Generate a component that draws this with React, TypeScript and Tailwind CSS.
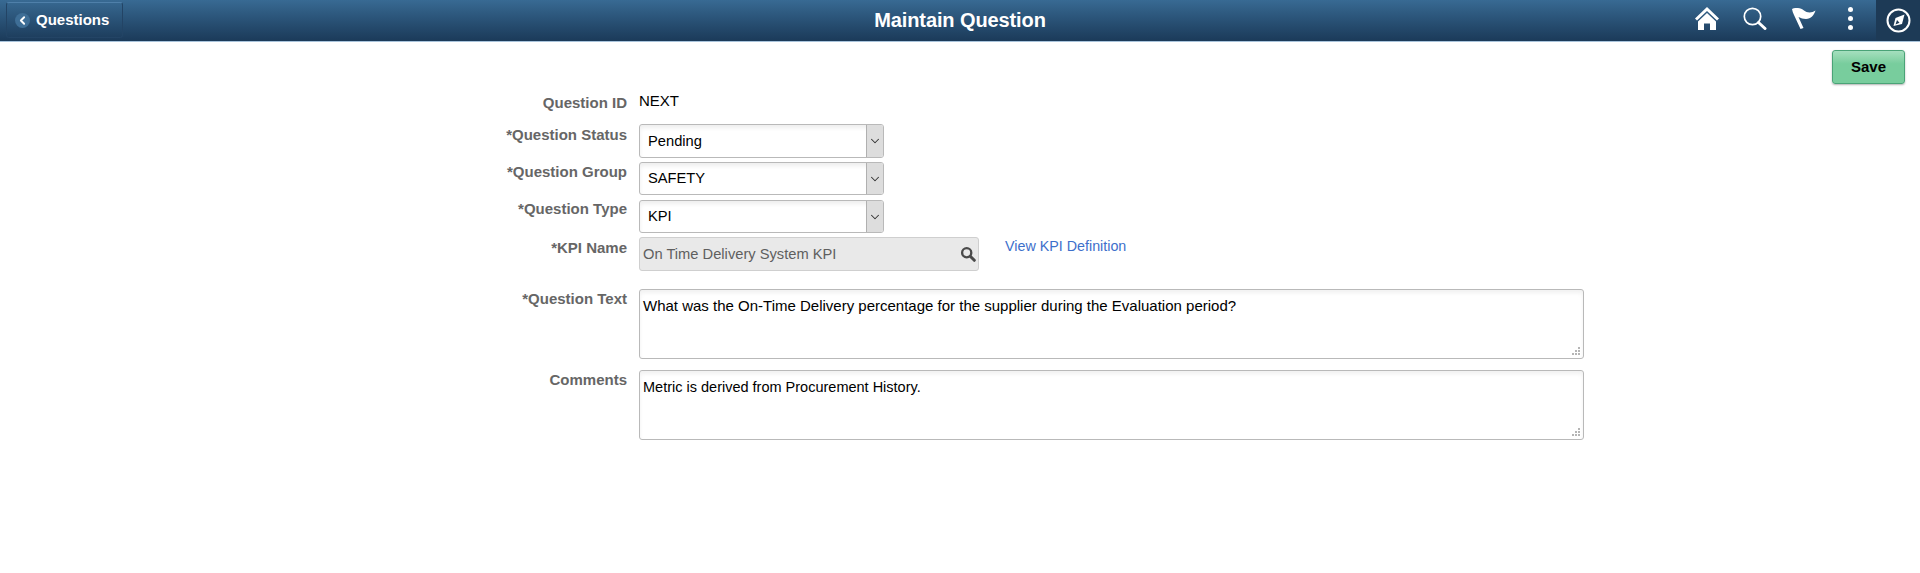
import React from 'react';
import { ChevronDown, ChevronLeft } from 'lucide-react';

const HomeIcon = () => (
  <svg width="24" height="23" viewBox="0 0 24 23" fill="#fff">
    <path d="M12 0 L24 11.5 L22 13.5 L12 4 L2 13.5 L0 11.5 Z" />
    <path d="M12 6 L21 14.5 V23 H15 V16.5 H9 V23 H3 V14.5 Z" />
  </svg>
);

const SearchIcon = () => (
  <svg width="24" height="23" viewBox="0 0 24 23" fill="none" stroke="#fff">
    <circle cx="9.5" cy="9.5" r="8.2" strokeWidth="1.7" />
    <path d="M15.5 15.5 L22 21.5" strokeWidth="3" strokeLinecap="round" />
  </svg>
);

const FlagIcon = () => (
  <svg width="24" height="21" viewBox="0 0 24 21" fill="#fff">
    <path d="M0 1 C4 -1 9 0 12 2.5 C15 5 20 5 23.5 2.5 C22 7 19 11 14 11 C11 11 9 10 6.5 9 L11.5 20 L8.5 21 L2 7 C1 5 0.3 3 0 1 Z" />
  </svg>
);

const CompassIcon = () => (
  <svg width="25" height="25" viewBox="0 0 25 25" fill="none">
    <circle cx="12.5" cy="12.5" r="11" stroke="#fff" strokeWidth="2" />
    <path d="M18.5 6.5 L16 16 L7.5 18 L9.5 10 Z" fill="#fff" />
    <path d="M9.5 16.5 L11 12 L13.5 14.8 Z" fill="#1d3a56" />
  </svg>
);

const Lookup = () => (
  <svg width="16" height="16" viewBox="0 0 16 16" fill="none" stroke="#4a4a4a">
    <circle cx="6.7" cy="6.7" r="4.6" strokeWidth="2.3" />
    <path d="M10.5 10.5 L14.3 14.3" strokeWidth="3" strokeLinecap="round" />
  </svg>
);

const Grip = () => (
  <svg width="8" height="8" viewBox="0 0 8 8" fill="#b5b5b5" className="absolute bottom-[3px] right-[3px]">
    <rect x="6" y="0" width="2" height="2" />
    <rect x="3" y="3" width="2" height="2" />
    <rect x="6" y="3" width="2" height="2" />
    <rect x="0" y="6" width="2" height="2" />
    <rect x="3" y="6" width="2" height="2" />
    <rect x="6" y="6" width="2" height="2" />
  </svg>
);

const Field = ({ label, top = 0, children }: { label: string; top?: number; children: React.ReactNode }) => (
  <div className="flex items-start">
    <div className="w-[627px] shrink-0 text-right text-[15px] leading-[16px] font-bold text-[#666666]" style={{ paddingTop: top }}>
      {label}
    </div>
    <div className="ml-[12px] min-w-0">{children}</div>
  </div>
);

const SelectBox = ({ value, h }: { value: string; h: string }) => (
  <div className={`${h} w-[245px] flex rounded-[3px] border border-[#b9b9b9] bg-white shadow-[inset_0_3px_4px_rgba(0,0,0,0.07)]`}>
    <div className="flex-1 pl-[8px] flex items-center text-[14.7px] text-black">{value}</div>
    <div className="w-[17px] flex items-center justify-center bg-[#dddddd] border-l border-[#b0b0b0] rounded-r-[2px]">
      <ChevronDown size={14} color="#333333" strokeWidth={1.8} />
    </div>
  </div>
);

const TextBox = ({ value, size }: { value: string; size: string }) => (
  <div className={`${size} relative w-[945px] h-[70px] rounded-[3px] border border-[#b9b9b9] bg-white px-[3px] pt-[8px] leading-[16px] text-black shadow-[inset_0_3px_4px_rgba(0,0,0,0.06)]`}>
    {value}
    <Grip />
  </div>
);

export default function App() {
  return (
    <div className="h-[573px] bg-white font-['Liberation_Sans',Arial,sans-serif]">
      <header className="relative h-[42px] flex items-center justify-between bg-gradient-to-b from-[#386a93] to-[#1b3a59] border-b border-[#a9c4dc]">
        <button className="ml-[6px] mt-[-1px] h-[36px] w-[117px] flex items-center rounded-[3px] border border-[#234465] border-t-[#4f80aa] pl-[8px] text-[15px] font-bold text-white">
          <span className="w-[15px] h-[15px] rounded-full bg-[#3e6e96] flex items-center justify-center">
            <ChevronLeft size={13} color="#fff" strokeWidth={3.5} />
          </span>
          <span className="ml-[6px]">Questions</span>
        </button>
        <h1 className="absolute left-0 right-0 top-[9px] text-center text-[20px] leading-[23px] tracking-[-0.1px] font-bold text-white">Maintain Question</h1>
        <div className="flex items-center h-full">
          <div className="flex items-center pb-[4px]">
            <div className="w-[24px] mr-[24px] flex"><HomeIcon /></div>
            <div className="w-[24px] mr-[25px] flex"><SearchIcon /></div>
            <div className="w-[24px] mr-[32px] flex"><FlagIcon /></div>
            <div className="w-[5px] mr-[23px] flex flex-col gap-[4px]">
              <span className="w-[5px] h-[5px] rounded-full bg-white" />
              <span className="w-[5px] h-[5px] rounded-full bg-white" />
              <span className="w-[5px] h-[5px] rounded-full bg-white" />
            </div>
          </div>
          <div className="w-[44px] h-full flex items-center justify-center bg-[#1d3a56]"><CompassIcon /></div>
        </div>
      </header>

      <div className="flex justify-end pt-[8px] pr-[15px]">
        <button className="w-[73px] h-[34px] rounded-[3px] border border-[#4aa377] bg-gradient-to-b from-[#a5dfbe] to-[#78cd9d] to-40% text-[15px] font-bold text-black shadow-[0_1px_2px_rgba(0,0,0,0.3)]">
          Save
        </button>
      </div>

      <div className="flex flex-col mt-[8px]">
        <div className="mb-[13px]">
          <Field label="Question ID" top={3}>
            <div className="text-[15px] leading-[16px] pt-[1px] text-black">NEXT</div>
          </Field>
        </div>
        <div className="mb-[4px]">
          <Field label="*Question Status" top={3}><SelectBox value="Pending" h="h-[34px]" /></Field>
        </div>
        <div className="mb-[5px]">
          <Field label="*Question Group" top={2}><SelectBox value="SAFETY" h="h-[33px]" /></Field>
        </div>
        <div className="mb-[4px]">
          <Field label="*Question Type" top={1}><SelectBox value="KPI" h="h-[33px]" /></Field>
        </div>
        <div className="mb-[18px]">
          <Field label="*KPI Name" top={3}>
            <div className="flex items-start">
              <div className="w-[340px] h-[34px] flex items-center justify-between rounded-[3px] border border-[#cfcfcf] bg-[#e9e9e9] pl-[3px] pr-[2px] text-[14.7px] text-[#5f5f5f]">
                <span>On Time Delivery System KPI</span>
                <Lookup />
              </div>
              <a className="ml-[26px] pt-[1px] text-[14.3px] leading-[16px] text-[#3d6fcb]">View KPI Definition</a>
            </div>
          </Field>
        </div>
        <div className="mb-[11px]">
          <Field label="*Question Text" top={2}>
            <TextBox size="text-[15px]" value="What was the On-Time Delivery percentage for the supplier during the Evaluation period?" />
          </Field>
        </div>
        <Field label="Comments" top={2}>
          <TextBox size="text-[14.5px]" value="Metric is derived from Procurement History." />
        </Field>
      </div>
    </div>
  );
}
